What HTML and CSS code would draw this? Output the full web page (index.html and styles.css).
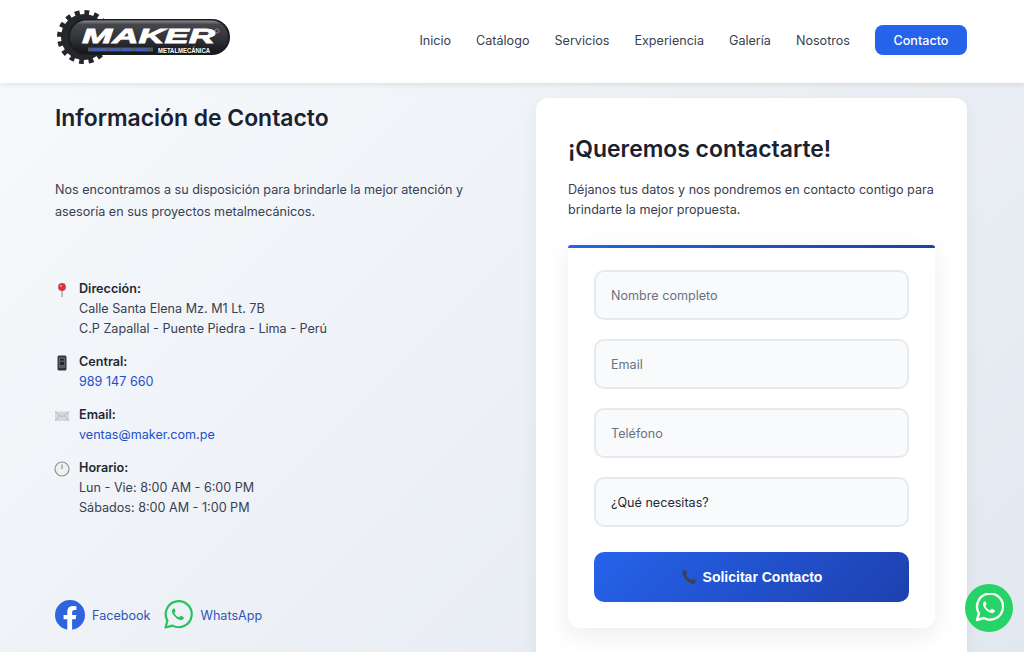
FILE: index.html
```html
<!DOCTYPE html>
<html lang="es">
<head>
    <meta charset="utf-8">
    <meta name="viewport" content="width=device-width, initial-scale=1.0">
    <title>Contacto - Maker Metalmecánica</title>
    <link rel="stylesheet" href="styles.css">
</head>
<body>
    <div class="page">
        <!-- cabecera -->
        <header class="topbar">
            <a class="logo" href="#">
                <svg width="176" height="56" viewBox="0 0 176 56">
                    <defs>
                        <linearGradient id="pill" x1="0" y1="0" x2="0" y2="1">
                            <stop offset="0" stop-color="#8a8d92"/>
                            <stop offset="0.12" stop-color="#45474d"/>
                            <stop offset="0.6" stop-color="#2f3035"/>
                            <stop offset="1" stop-color="#15161a"/>
                        </linearGradient>
                    </defs>
                    <circle cx="29" cy="28" r="24" fill="none" stroke="#26272b" stroke-width="6" stroke-dasharray="4.7 4.7"/>
                    <circle cx="29" cy="28" r="23" fill="#26272b"/>
                    <rect x="13" y="10" width="162" height="36" rx="18" fill="#1b1c20"/>
                    <rect x="15" y="11.500" width="158" height="33" rx="16.500" fill="url(#pill)"/>
                    <text class="logo-name" x="27" y="34" textLength="133" lengthAdjust="spacingAndGlyphs">MAKER</text>
                    <rect x="33" y="38.500" width="65" height="4" fill="#55585e"/>
                    <rect x="37" y="39.500" width="14" height="2.500" fill="#3f5fc8"/>
                    <rect x="54" y="39.500" width="10" height="2.500" fill="#3f5fc8"/>
                    <rect x="67" y="39.500" width="10" height="2.500" fill="#3f5fc8"/>
                    <rect x="81" y="39.500" width="11" height="2.500" fill="#3f5fc8"/>
                    <text class="logo-sub" x="103" y="44" textLength="52" lengthAdjust="spacingAndGlyphs">METALMECÁNICA</text>
                    <circle cx="162" cy="22" r="2" fill="none" stroke="#aaa" stroke-width="0.7"/>
                </svg>
            </a>
            <nav class="menu">
                <a href="#">Inicio</a>
                <a href="#">Catálogo</a>
                <a href="#">Servicios</a>
                <a href="#">Experiencia</a>
                <a href="#">Galería</a>
                <a href="#">Nosotros</a>
                <a href="#" class="menu-cta">Contacto</a>
            </nav>
        </header>

        <main class="contact">
            <!-- columna izquierda -->
            <section class="info">
                <h2>Información de Contacto</h2>
                <p class="intro">Nos encontramos a su disposición para brindarle la mejor atención y asesoría en sus proyectos metalmecánicos.</p>

                <ul class="details">
                    <li>
                        <svg class="ico" width="16" height="16" viewBox="0 0 16 16">
                            <rect x="7.400" y="7" width="1.300" height="8" fill="#9aa0a8"/>
                            <circle cx="8" cy="5" r="3.900" fill="#d8343a"/>
                            <circle cx="7" cy="3.900" r="1" fill="#f3a5a5"/>
                        </svg>
                        <div><strong>Dirección:</strong><br>Calle Santa Elena Mz. M1 Lt. 7B<br>C.P Zapallal - Puente Piedra - Lima - Perú</div>
                    </li>
                    <li>
                        <svg class="ico" width="16" height="16" viewBox="0 0 16 16">
                            <rect x="3.500" y="0.500" width="9" height="15" rx="1.500" fill="#30343b"/>
                            <rect x="4.700" y="2.300" width="6.600" height="10.600" fill="#596069"/>
                            <rect x="6" y="4" width="4" height="1.500" fill="#23262b"/>
                            <rect x="6" y="7" width="4" height="3" fill="#23262b"/>
                        </svg>
                        <div><strong>Central:</strong><br><a href="#">989 147 660</a></div>
                    </li>
                    <li>
                        <svg class="ico" width="16" height="16" viewBox="0 0 16 16">
                            <rect x="1" y="3.500" width="14" height="9.500" fill="#d5d9de"/>
                            <path d="M1 3.500L8 9L15 3.500M1 13L6 7.500M15 13L10 7.500" fill="none" stroke="#aeb4bb" stroke-width="0.800"/>
                        </svg>
                        <div><strong>Email:</strong><br><a href="#">ventas@maker.com.pe</a></div>
                    </li>
                    <li>
                        <svg class="ico" width="16" height="16" viewBox="0 0 16 16">
                            <circle cx="8" cy="8" r="7" fill="#f1f1f1" stroke="#8e9298" stroke-width="1.200"/>
                            <path d="M8 3.500V8" fill="none" stroke="#6b6f75" stroke-width="0.900"/>
                        </svg>
                        <div><strong>Horario:</strong><br>Lun - Vie: 8:00 AM - 6:00 PM<br>Sábados: 8:00 AM - 1:00 PM</div>
                    </li>
                </ul>

                <div class="social">
                    <a href="#">
                        <svg width="30" height="30" viewBox="0 0 30 30">
                            <circle cx="15" cy="15" r="15" fill="#2f65dc"/>
                            <path d="M20.600 19.300l.7-4.300h-4.200v-2.800c0-1.200.6-2.300 2.400-2.300h1.900V6.200s-1.700-.3-3.400-.3c-3.400 0-5.700 2.100-5.700 5.800V15H8.600v4.300h3.700v10.500a15 15 0 0 0 4.800 0V19.300z" fill="#fff"/>
                        </svg>
                        Facebook
                    </a>
                    <a href="#">
                        <svg width="30" height="30" viewBox="0 0 30 30">
                            <path d="M2.500 27.500l1.900-6.900A13 13 0 1 1 9.500 25.600z" fill="none" stroke="#25c45f" stroke-width="2.200" stroke-linejoin="round"/>
                            <path d="M11 8.600c-.5 0-1.400.5-1.800 1.400-.6 1.400-.2 3.200 1.600 5.500 2.200 2.800 4.400 4.200 6.600 4.600 1.500.3 2.900-.5 3.300-1.500.2-.6.3-1.200.2-1.400-.2-.3-2.500-1.400-3-1.500-.4-.1-1 .9-1.400 1.300-.3.3-.6.3-1 .1-1.900-.8-3.200-2.100-4-3.600-.2-.4-.1-.7.2-1 .3-.3.8-.9.8-1.300 0-.3-.8-2.400-1.100-2.600z" fill="#25c45f"/>
                        </svg>
                        WhatsApp
                    </a>
                </div>
            </section>

            <!-- formulario -->
            <section class="card">
                <h2>¡Queremos contactarte!</h2>
                <p>Déjanos tus datos y nos pondremos en contacto contigo para brindarte la mejor propuesta.</p>
                <form class="form">
                    <input type="text" placeholder="Nombre completo">
                    <input type="email" placeholder="Email">
                    <input type="tel" placeholder="Teléfono">
                    <div class="select">¿Qué necesitas?</div>
                    <button type="button">
                        <svg width="16" height="16" viewBox="0 0 16 16">
                            <path d="M2 1.500L4.700.8 6.300 4 4.900 5.300c.9 2.500 2.900 4.700 5.600 5.800l1.300-1.300 3 1.800-.8 2.700c-.3.6-1 .9-1.900.7C6.500 13.800 2.300 9.300 1.300 3.300c-.1-.8.2-1.500.7-1.800z" fill="#3b4350"/>
                        </svg>
                        Solicitar Contacto
                    </button>
                </form>
            </section>
        </main>

        <a class="wa-float" href="#">
            <svg width="30" height="30" viewBox="0 0 30 30">
                <path d="M3 27l1.900-6.700A13 13 0 1 1 9.800 25z" fill="none" stroke="#fff" stroke-width="2.400" stroke-linejoin="round"/>
                <path d="M11 8.600c-.5 0-1.400.5-1.800 1.400-.6 1.400-.2 3.200 1.600 5.500 2.200 2.800 4.400 4.200 6.600 4.600 1.500.3 2.900-.5 3.300-1.500.2-.6.3-1.200.2-1.400-.2-.3-2.500-1.400-3-1.500-.4-.1-1 .9-1.400 1.300-.3.3-.6.3-1 .1-1.900-.8-3.200-2.100-4-3.600-.2-.4-.1-.7.2-1 .3-.3.8-.9.8-1.300 0-.3-.8-2.400-1.100-2.600z" fill="#fff"/>
            </svg>
        </a>
    </div>
</body>
</html>
```

FILE: styles.css
```css
* {
    box-sizing: border-box;
}

body {
    margin: 0;
    font-family: "Inter", "Liberation Sans", sans-serif;
    color: #1f2937;
}

.page {
    height: 100vh;
    overflow: hidden;
    background: linear-gradient(135deg, #f8fafc 0%, #e2e8f0 100%);
}

a {
    text-decoration: none;
}

/* cabecera */
.topbar {
    height: 83px;
    padding: 9px 57px 0 55px;
    display: flex;
    justify-content: space-between;
    align-items: flex-start;
    background: #fff;
    box-shadow: 0 1px 6px rgb(15 23 42 / 0.12);
}

.logo {
    display: block;
    height: 56px;
}

.logo-name {
    font-family: "Liberation Sans", sans-serif;
    font-size: 21px;
    font-weight: 700;
    font-style: italic;
    fill: #fff;
    stroke: #fff;
    stroke-width: 0.8px;
}

.logo-sub {
    font-family: "Liberation Sans", sans-serif;
    font-size: 7px;
    font-weight: 700;
    fill: #fff;
}

.menu {
    display: flex;
    align-items: center;
    gap: 25px;
    margin-top: 16px;
    font-size: 12.6px;
}

.menu a {
    color: #374151;
}

.menu .menu-cta {
    width: 92px;
    height: 30px;
    display: flex;
    align-items: center;
    justify-content: center;
    border-radius: 8px;
    background: #2563eb;
    color: #fff;
    font-weight: 500;
}

/* contenido */
.contact {
    padding: 15px 57px 0 55px;
    display: flex;
    justify-content: space-between;
    align-items: flex-start;
}

.info {
    width: 416px;
}

.info h2 {
    margin: 5px 0 0;
    font-size: 22.9px;
    line-height: 30px;
    font-weight: 600;
    color: #1a2130;
}

.intro {
    margin: 46px 0 0;
    font-size: 12.6px;
    line-height: 22px;
    color: #374151;
}

.details {
    list-style: none;
    margin: 56px 0 0;
    padding: 0;
    font-size: 12.6px;
    line-height: 20px;
    color: #374151;
}

.details li {
    display: flex;
    gap: 9px;
    margin-bottom: 13px;
}

.details strong {
    font-weight: 600;
    color: #1f2937;
}

.details a {
    color: #2050c8;
}

.ico {
    flex: none;
    margin-top: 3px;
    margin-left: -1px;
}

.social {
    margin-top: 82px;
    display: flex;
    gap: 13px;
    font-size: 12.6px;
}

.social a {
    display: flex;
    align-items: center;
    gap: 7px;
    color: #2f55b8;
}

/* tarjeta del formulario */
.card {
    width: 431px;
    height: 640px;
    padding: 32px;
    background: #fff;
    border-radius: 12px;
    box-shadow: 0 4px 16px rgb(15 23 42 / 0.06);
}

.card h2 {
    margin: 4px 0 0;
    font-size: 22.9px;
    line-height: 30px;
    font-weight: 600;
    color: #1a2130;
}

.card p {
    margin: 16px 0 0;
    font-size: 12.6px;
    line-height: 20px;
    color: #374151;
}

.form {
    margin-top: 25px;
    padding: 25px 26px 26px;
    display: flex;
    flex-direction: column;
    gap: 19px;
    background: linear-gradient(90deg, #2563eb, #1e3fae) top / 100% 3px no-repeat, #fff;
    box-shadow: 0 8px 24px rgb(15 23 42 / 0.08);
    border-radius: 3px 3px 12px 12px;
}

.form input,
.select {
    width: 100%;
    height: 50px;
    padding: 0 15px;
    display: flex;
    align-items: center;
    background: #f8fafc;
    border: 2px solid #e6e9ee;
    border-radius: 10px;
    font-family: inherit;
    font-size: 12.6px;
    color: #1f2937;
}

.form input::placeholder {
    color: #6b7280;
    opacity: 1;
}

.form button {
    height: 50px;
    margin-top: 6px;
    display: flex;
    align-items: center;
    justify-content: center;
    gap: 6px;
    border: none;
    border-radius: 10px;
    background: linear-gradient(135deg, #2563eb, #1e40af);
    color: #fff;
    font-family: "Liberation Sans", sans-serif;
    font-size: 14px;
    font-weight: 700;
}

/* boton flotante */
.wa-float {
    position: fixed;
    left: 965px;
    top: 584px;
    width: 48px;
    height: 48px;
    display: flex;
    align-items: center;
    justify-content: center;
    border-radius: 50%;
    background: #25d366;
}
```
